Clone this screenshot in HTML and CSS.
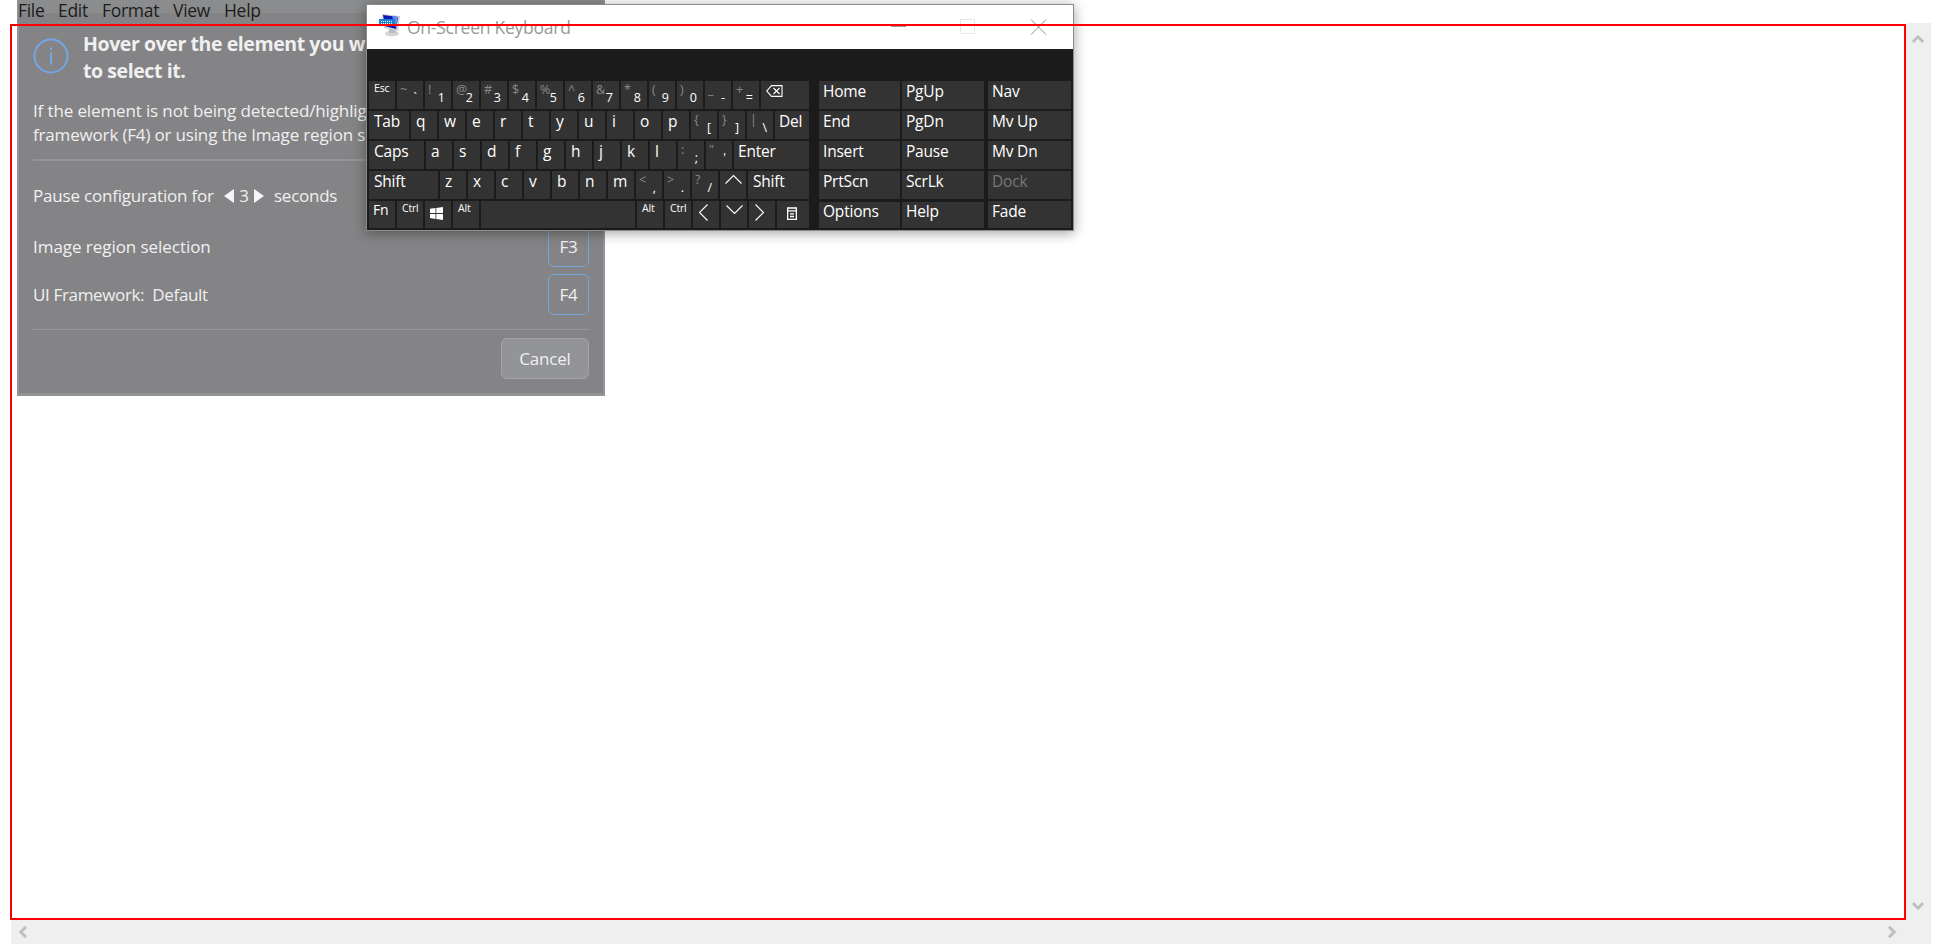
FILE: index.html
```html
<!DOCTYPE html>
<html lang="en">
<head>
<meta charset="utf-8">
<title>Notepad</title>
<link rel="stylesheet" href="styles.css">
</head>
<body>
<main class="desktop">
  <div class="notepad">
    <div class="row-main">
      <div class="page"></div>
      <div class="vscroll">
        <svg width="12" height="10" viewBox="0 0 12 10"><path d="M.8 8 6 2.8 11.2 8"/></svg>
        <svg width="12" height="10" viewBox="0 0 12 10"><path d="M.8 2 6 7.2 11.2 2"/></svg>
      </div>
    </div>
    <div class="hscroll">
      <svg width="10" height="12" viewBox="0 0 10 12"><path d="M8 .8 2.8 6 8 11.2"/></svg>
      <svg width="10" height="12" viewBox="0 0 10 12"><path d="M2 .8 7.2 6 2 11.2"/></svg>
    </div>
  </div>

  <section class="panel">
    <nav class="menu"><span class="m1">File</span><span class="m2">Edit</span><span class="m3">Format</span><span class="m4">View</span><span class="m5">Help</span></nav>
    <div class="content">
      <header class="head">
        <svg class="info" width="36" height="36" viewBox="0 0 36 36"><circle cx="18" cy="18" r="16.500"/><path d="M18 14.5v12M18 9.500v2.500"/></svg>
        <h1>Hover over the element you w<br>to select it.</h1>
      </header>
      <p class="desc">If the element is not being detected/highlig<br><span class="d2">framework (F4) or using the Image region s</span></p>
      <hr class="thick">
      <div class="line pause"><span class="t-pause">Pause configuration for</span><svg width="10" height="14" viewBox="0 0 10 14"><path d="M10 0v14L0 7z"/></svg><span class="num">3</span><svg width="10" height="14" viewBox="0 0 10 14"><path d="M0 0v14l10-7z"/></svg><span class="sec">seconds</span></div>
      <div class="line"><span class="t-img">Image region selection</span><span class="fkey">F3</span></div>
      <div class="line"><span class="t-ui">UI Framework:&nbsp; Default</span><span class="fkey">F4</span></div>
      <hr class="thin">
      <div class="foot"><button class="cancel">Cancel</button></div>
    </div>
  </section>

  <section class="osk">
    <header class="title">
      <svg class="app" width="24" height="24" viewBox="0 0 24 24">
        <ellipse cx="14" cy="19.500" rx="7" ry="3" fill="#d3d5d8"/>
        <path d="M11 14h6l1 5h-7z" fill="#b9bdc2"/>
        <path d="M4 0 22 2 20 17 6 14z" fill="#c9cdd2"/>
        <path d="M5 1 20 3 18 15 7 12z" fill="#0718b8"/>
        <path d="M14 2 20 3 18 14z" fill="#6c85e8"/>
        <path d="M1 5h16v6H1z" fill="#1683d8"/>
        <path d="M3 7.500h12M3 9.500h12" stroke="#fff" stroke-dasharray="1 1"/>
      </svg>
      <h2>On-Screen Keyboard</h2>
      <svg class="controls" width="156" height="16" viewBox="0 0 156 16"><path d="M0 7.5h15" stroke="#999"/><path d="M69.5.5h14v14h-14z" stroke="#e6e6e6"/><path d="m140 .5 15 15m0-15-15 15" stroke="#8d8d8d"/></svg>
    </header>
    <div class="keys">
      <div class="main">
        <div class="krow"><b class="k sm">Esc</b><b class="k d"><i>~</i><u>`</u></b><b class="k d"><i>!</i><u>1</u></b><b class="k d"><i>@</i><u>2</u></b><b class="k d"><i>#</i><u>3</u></b><b class="k d"><i>$</i><u>4</u></b><b class="k d"><i>%</i><u>5</u></b><b class="k d"><i>^</i><u>6</u></b><b class="k d"><i>&amp;</i><u>7</u></b><b class="k d"><i>*</i><u>8</u></b><b class="k d"><i>(</i><u>9</u></b><b class="k d"><i>)</i><u>0</u></b><b class="k d"><i>_</i><u>-</u></b><b class="k d"><i>+</i><u>=</u></b><b class="k grow"><svg width="17" height="12" viewBox="0 0 17 12"><path d="M5.500.6h10.500v10.800H5.500L.8 6zM7.500 3l6 6m0-6-6 6"/></svg></b></div>
        <div class="krow"><b class="k tab">Tab</b><b class="k">q</b><b class="k">w</b><b class="k">e</b><b class="k">r</b><b class="k">t</b><b class="k">y</b><b class="k">u</b><b class="k">i</b><b class="k">o</b><b class="k">p</b><b class="k d"><i>{</i><u>[</u></b><b class="k d"><i>}</i><u>]</u></b><b class="k d"><i>|</i><u>\</u></b><b class="k grow">Del</b></div>
        <div class="krow"><b class="k caps">Caps</b><b class="k">a</b><b class="k">s</b><b class="k">d</b><b class="k">f</b><b class="k">g</b><b class="k">h</b><b class="k">j</b><b class="k">k</b><b class="k">l</b><b class="k d"><i>:</i><u>;</u></b><b class="k d"><i>"</i><u>'</u></b><b class="k grow">Enter</b></div>
        <div class="krow"><b class="k shift">Shift</b><b class="k">z</b><b class="k">x</b><b class="k">c</b><b class="k">v</b><b class="k">b</b><b class="k">n</b><b class="k">m</b><b class="k d"><i>&lt;</i><u>,</u></b><b class="k d"><i>&gt;</i><u>.</u></b><b class="k d"><i>?</i><u>/</u></b><b class="k"><svg width="17" height="9" viewBox="0 0 17 9"><path d="m.5 8.500 8-8 8 8"/></svg></b><b class="k grow rshift">Shift</b></div>
        <div class="krow last"><b class="k fn">Fn</b><b class="k sm">Ctrl</b><b class="k win"><svg width="13" height="13" viewBox="0 0 13 13"><path d="M0 1.800 5.500 1v5H0zM6.300.900 13 0v6H6.300zM0 6.900h5.500v5L0 11.100zM6.300 6.900H13V13l-6.700-.900z"/></svg></b><b class="k sm">Alt</b><b class="k space"></b><b class="k sm">Alt</b><b class="k sm">Ctrl</b><b class="k"><svg class="side-arrow" width="9" height="17" viewBox="0 0 9 17"><path d="m8.500.5-8 8 8 8"/></svg></b><b class="k"><svg width="17" height="9" viewBox="0 0 17 9"><path d="m.5.5 8 8 8-8"/></svg></b><b class="k"><svg class="side-arrow" width="9" height="17" viewBox="0 0 9 17"><path d="m.5.5 8 8-8 8"/></svg></b><b class="k grow"><svg class="ctx" width="10" height="13" viewBox="0 0 10 13"><path d="M.65 1h8.700v11.350H.65zM0 3.800h10M3 6.800h4M3 9.500h4"/></svg></b></div>
      </div>
      <div class="side">
        <b class="k">Home</b><b class="k">PgUp</b><b class="k nav">Nav</b>
        <b class="k">End</b><b class="k">PgDn</b><b class="k nav">Mv Up</b>
        <b class="k">Insert</b><b class="k">Pause</b><b class="k nav">Mv Dn</b>
        <b class="k">PrtScn</b><b class="k">ScrLk</b><b class="k nav off">Dock</b>
        <b class="k short">Options</b><b class="k short">Help</b><b class="k nav">Fade</b>
      </div>
    </div>
  </section>

  <div class="highlight"></div>
</main>
</body>
</html>
```
FILE: styles.css
```css
* { box-sizing: border-box; }
body { margin: 0; background: #fff; font-family: "Open Sans", "Noto Sans", sans-serif; }
h1, h2, p, hr { margin: 0; border: 0; }
svg { display: block; flex: none; fill: none; }
.desktop { position: relative; width: 1942px; height: 944px; overflow: hidden; }

.notepad { display: flex; flex-direction: column; height: 944px; padding: 23px 11px 0; }
.row-main { display: flex; flex: 1; }
.page { flex: 1; }
.vscroll { width: 25px; background: #efefef; display: flex; flex-direction: column; justify-content: space-between; align-items: center; padding: 11px 1px 9px 0; }
.hscroll { height: 24px; background: #efefef; display: flex; justify-content: space-between; padding: 6px 34px 0 7px; }
.vscroll svg, .hscroll svg { stroke: #bfbfbf; stroke-width: 3; }

.panel { position: absolute; left: 17px; top: 0; width: 588px; height: 396px; background: #848486; border: solid #939498; border-width: 0 2px 3px; border-bottom-color: #919296; color: #f0f0f0; }
.menu { display: flex; height: 23px; margin-left: -1px; color: #1c1c1c; font-size: 17.5px; background: linear-gradient(#8a8c8d 13px, #848486 13px); white-space: nowrap; }
.menu span { line-height: 21px; flex: none; letter-spacing: -.3px; }
.m1 { width: 40px; }
.m2 { width: 44px; }
.m3 { width: 71px; }
.m4 { width: 51px; }
.content { padding: 9px 14px 0; font-size: 17px; white-space: nowrap; overflow: hidden; }
.head { display: flex; gap: 14px; height: 65px; }
.info { margin-top: 6px; stroke: #72a7e8; stroke-width: 2; }
h1 { font-size: 19.5px; line-height: 27px; font-weight: 700; letter-spacing: -.42px; margin-top: -2px; }
.desc { line-height: 24px; height: 62px; letter-spacing: -.13px; margin-top: 2px; }
.d2 { letter-spacing: -.17px; }
hr.thick { height: 2px; background: #949598; margin-top: -2px; }
hr.thin { height: 1px; background: #99999c; margin-top: 11px; }
.line { display: flex; align-items: center; justify-content: space-between; height: 48px; letter-spacing: -.3px; }
.pause { justify-content: flex-start; height: 61px; padding-top: 8px; }
.pause svg { fill: #f3f5f6; }
.t-pause { width: 191px; letter-spacing: -.2px; }
.t-img { letter-spacing: -.05px; }
.t-ui { letter-spacing: -.35px; }
.num { width: 20px; text-align: center; }
.sec { margin-left: 10px; letter-spacing: -.25px; }
.fkey { width: 41px; height: 41px; border: 1.500px solid #73a8dc; border-radius: 6px; text-align: center; line-height: 39px; }
.foot { display: flex; justify-content: flex-end; padding-top: 8px; }
.cancel { width: 88px; height: 41px; background: #929498; border: 1px solid #a2a4a7; border-radius: 6px; color: #f0f0f0; font: 17px "Open Sans", sans-serif; padding: 0; letter-spacing: -.2px; }

.osk { position: absolute; left: 366px; top: 4px; width: 708px; height: 227px; border: 1px solid #8c8c8c; box-shadow: 0 2px 12px rgba(0,0,0,.38); background: #1b1b1b; color: #fff; }
.title { display: flex; height: 44px; background: #fff; padding-left: 11px; }
.app { margin-top: 9px; }
h2 { font-size: 17.5px; font-weight: 400; color: #999; line-height: 24px; margin: 10px 0 0 5px; letter-spacing: -.25px; width: 484px; white-space: nowrap; }
.controls { margin-top: 14px; }
.keys { display: flex; gap: 10px; padding: 32px 2px 0; }
.main { width: 440px; display: flex; flex-direction: column; gap: 2px; }
.krow { display: flex; gap: 2px; height: 28px; }
.last { height: 27px; }
.k { display: block; flex: none; width: 26px; height: 100%; background: #333; font-weight: 400; font-size: 15.5px; line-height: 21px; padding-left: 5px; letter-spacing: -.2px; white-space: nowrap; }
.k.grow, .side .k, .k.fn { padding-left: 4px; }
.k.grow { flex: 1; }
.k.rshift { padding-left: 5px; }
.k.sm { font-size: 10.5px; line-height: 15px; letter-spacing: -.2px; }
.k.fn { font-size: 14px; line-height: 18px; }
.tab { width: 40px; }
.caps { width: 55px; }
.shift { width: 69px; }
.space { width: 154px; }
.k.d { display: flex; justify-content: space-between; padding: 0 6px 0 3px; letter-spacing: 0; }
.d i { font-style: normal; font-size: 12.5px; color: #8a8a8a; line-height: 18px; width: 8px; }
.d u { text-decoration: none; font-size: 12.5px; line-height: 33px; }
.k svg { margin: 4px 0 0; stroke: #fff; stroke-width: 1.100; }
.k.grow svg { margin-left: 1px; }
.k .side-arrow { margin-top: 3px; margin-left: 1px; }
.k.grow .ctx { margin: 6px 0 0 6px; stroke-width: 1.300; }
.k.win svg { fill: #fff; stroke: none; margin: 6px 0 0; }
.side { display: grid; grid-template-columns: 83px 86px 83px; grid-template-rows: 28px 28px 28px 28px 27px; row-gap: 2px; }
.side .k { width: 81px; }
.side .k:nth-child(3n+2) { width: 82px; }
.side .k.nav { width: 83px; }
.side .k.short { height: 26px; margin-top: 1px; line-height: 19px; }
.side .off { color: #777; }

.highlight { position: absolute; left: 10px; top: 24px; width: 1896px; height: 896px; border: 2px solid #f00; }
```
